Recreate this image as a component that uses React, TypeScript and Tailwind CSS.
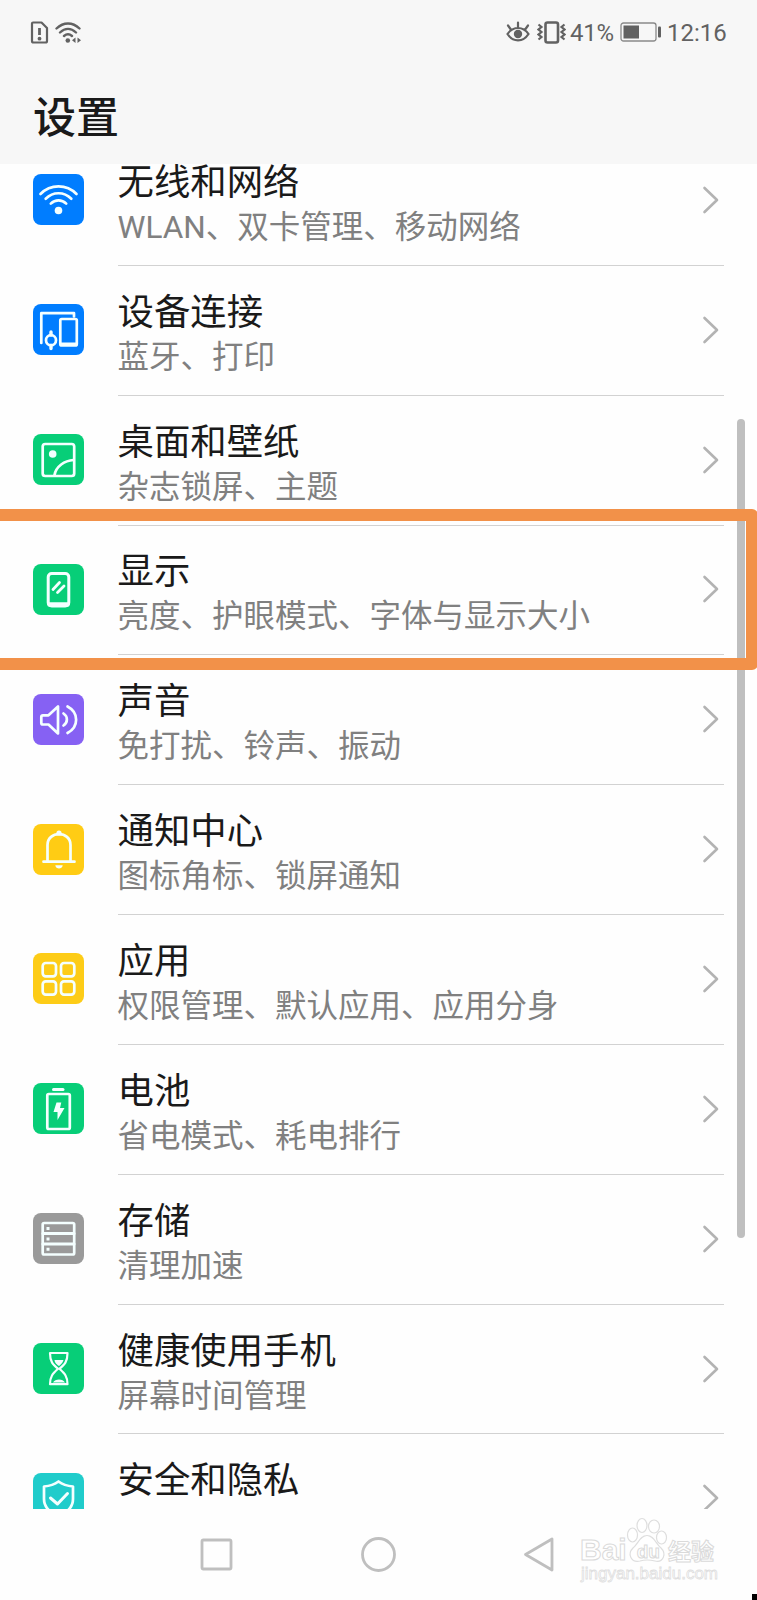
import type { ReactNode } from "react";

type Setting = {
  title: string;
  desc?: string;
  color: string;
  icon: ReactNode;
};

const settings: Setting[] = [
  {
    title: "无线和网络",
    desc: "WLAN、双卡管理、移动网络",
    color: "bg-[#007dff]",
    icon: (
      <>
        <path d="M7.5 20C17.5 9.8 33.5 9.8 43.5 20M12.7 24.8C20 17.4 31 17.4 38.3 24.8M17.8 29.6C22.2 25.2 28.8 25.2 33.2 29.6" />
        <circle cx="25.5" cy="36.5" r="3.8" fill="currentColor" stroke="none" />
      </>
    ),
  },
  {
    title: "设备连接",
    desc: "蓝牙、打印",
    color: "bg-[#007dff]",
    icon: (
      <>
        <path d="M8.3 39V9.2H41V12.5" />
        <rect x="27.3" y="15" width="16.5" height="26.5" rx="1.5" />
        <path d="M28 40.2H43" strokeWidth="3.5" />
        <circle cx="18" cy="36.2" r="5" />
        <path d="M18 28V31M18 41.5V44.5" strokeWidth="3.4" />
      </>
    ),
  },
  {
    title: "桌面和壁纸",
    desc: "杂志锁屏、主题",
    color: "bg-[#07ce78]",
    icon: (
      <>
        <rect x="9.7" y="10" width="31.5" height="32" rx="2.5" />
        <circle cx="19.7" cy="20" r="3.8" fill="currentColor" stroke="none" />
        <path d="M21.5 41C23 32.5 31.5 26.5 40.5 26" />
      </>
    ),
  },
  {
    title: "显示",
    desc: "亮度、护眼模式、字体与显示大小",
    color: "bg-[#07ce78]",
    icon: (
      <>
        <rect x="15.2" y="9.5" width="20.6" height="32.5" rx="3.5" strokeWidth="3" />
        <path d="M16.5 40.5H34.500" strokeWidth="4.5" />
        <path d="M20 25.500L26.500 18.500M24.500 28.500L31 22" strokeWidth="2.8" />
      </>
    ),
  },
  {
    title: "声音",
    desc: "免打扰、铃声、振动",
    color: "bg-[#8661f3]",
    icon: (
      <>
        <path d="M10 21.3H15.5L25 12.5V39.5L15.5 30.5H10Q8.3 30.5 8.3 29V23Q8.3 21.3 10 21.3Z" />
        <path d="M30.500 19.500C35 22.500 35 28.500 30.500 31.500M34.500 12.500C46 18.500 46 33 34.500 39" />
      </>
    ),
  },
  {
    title: "通知中心",
    desc: "图标角标、锁屏通知",
    color: "bg-[#ffcc14]",
    icon: (
      <>
        <path d="M10.5 37.7H41.500M14.500 37V21C14.500 6.500 37.500 6.500 37.500 21V37" />
        <circle cx="26" cy="9" r="2.6" fill="currentColor" stroke="none" />
        <path d="M22.300 41.200H29.700C29.200 45.500 22.800 45.500 22.300 41.200Z" fill="currentColor" stroke="none" />
      </>
    ),
  },
  {
    title: "应用",
    desc: "权限管理、默认应用、应用分身",
    color: "bg-[#fdcc17]",
    icon: (
      <>
        <rect x="9.700" y="10" width="13.3" height="13.3" rx="3" />
        <rect x="28" y="10" width="13.3" height="13.3" rx="3" />
        <rect x="9.700" y="28.3" width="13.3" height="13.3" rx="3" />
        <rect x="28" y="28.3" width="13.3" height="13.3" rx="3" />
      </>
    ),
  },
  {
    title: "电池",
    desc: "省电模式、耗电排行",
    color: "bg-[#07ce78]",
    icon: (
      <>
        <rect x="14.3" y="11" width="22.5" height="35" rx="1.5" />
        <path d="M20.500 6.500H30" strokeWidth="3" />
        <path d="M23.500 19.500H28.300L27 25H31.500L24.500 37V29H20.500Z" fill="currentColor" stroke="none" />
      </>
    ),
  },
  {
    title: "存储",
    desc: "清理加速",
    color: "bg-[#9a9a9a]",
    icon: (
      <>
        <rect x="9.700" y="10" width="31.5" height="31.5" rx="1.5" />
        <path d="M10 20.500H41M10 31H41" strokeWidth="3.2" />
        <path d="M13.500 15.500H16.500M13.500 26H16.500M13.500 36.300H16.500" strokeWidth="3" strokeLinecap="butt" />
      </>
    ),
  },
  {
    title: "健康使用手机",
    desc: "屏幕时间管理",
    color: "bg-[#07ce78]",
    icon: (
      <>
        <path
          d="M17 10H34.500C34.500 19 31.500 21.500 26.500 25.800C31.500 30.500 34.500 33 34.500 41.200H17C17 33 20 30.500 25 25.800C20 21.500 17 19 17 10Z"
          strokeWidth="2.2"
        />
        <path d="M21.500 17H30.500C29.500 20.500 27.500 21.500 26 23C24 21.500 22 20.500 21.500 17ZM20 39.500C22 35.500 30 35.500 32 39.500Z" fill="currentColor" stroke="none" />
      </>
    ),
  },
  {
    title: "安全和隐私",
    color: "bg-[#20cccb]",
    icon: (
      <>
        <path d="M25.500 8.500C29.500 11.500 34.500 13 40 13.500V26C40 35 33 40 25.500 43C18 40 11 35 11 26V13.500C16.500 13 21.500 11.500 25.500 8.500Z" />
        <path d="M17.500 25L24.500 31L34.500 20.500" strokeWidth="3" />
      </>
    ),
  },
];

function StatusBar() {
  return (
    <div className="flex h-16 items-center justify-between px-[30px] font-[Roboto,sans-serif] text-[24px] text-[#626262]">
      <div className="flex items-center gap-[6px]">
        <svg width="19" height="23" viewBox="0 0 19 23" fill="none" stroke="currentColor" strokeWidth="2.2" strokeLinejoin="round">
          <path d="M2 2.500Q2 1.500 3 1.500H11.500L17 7V20Q17 21.500 15.500 21.500H3.500Q2 21.500 2 20Z" />
          <path d="M9.500 7V14" strokeWidth="2.8" />
          <circle cx="9.500" cy="17.700" r="1.900" fill="currentColor" stroke="none" />
        </svg>
        <svg width="27" height="23" viewBox="0 0 27 23" fill="none" stroke="currentColor" strokeWidth="2.4" strokeLinecap="round">
          <path d="M1.500 7.500C8.500 0.800 17.500 0.800 24.500 7.500M5 11.500C10 6.800 16 6.800 21 11.500M9 15C11.500 12.700 14.500 12.700 17 15" />
          <circle cx="12.800" cy="19.500" r="2.300" fill="currentColor" stroke="none" />
          <path d="M20.500 16.500V22L17 19.300ZM22.500 16.500V22L26 19.300Z" fill="currentColor" stroke="none" />
        </svg>
      </div>
      <div className="flex items-center">
        <svg width="24" height="22" viewBox="0 0 24 22" fill="none" stroke="currentColor" strokeWidth="2.2" strokeLinecap="round">
          <path d="M1.500 13C7 5 17 5 22.500 13C17 21.500 7 21.500 1.500 13ZM12 1.500V6M2 4.500L4.500 8M22 4.500L19.500 8" />
          <circle cx="12" cy="13" r="4.200" fill="currentColor" stroke="none" />
        </svg>
        <svg className="ml-[7px]" width="29" height="23" viewBox="0 0 29 23" fill="none" stroke="currentColor" strokeWidth="2.2">
          <rect x="8.500" y="1.500" width="12.500" height="20" rx="2" strokeWidth="2.600" />
          <path d="M1.500 3.500L4.500 6L1.500 8.500L4.500 11L1.500 13.500L4.500 16L1.500 18.500M27.500 3.500L24.500 6L27.500 8.500L24.500 11L27.500 13.500L24.500 16L27.500 18.500" />
        </svg>
        <span className="ml-[4px] mt-px w-[44px] whitespace-nowrap tracking-[-0.2px]">41%</span>
        <svg className="ml-[6px]" width="42" height="20" viewBox="0 0 42 20" fill="none">
          <rect x="1" y="1" width="35" height="18" rx="2.5" stroke="#8a8a8a" strokeWidth="1.3" />
          <rect x="3.500" y="3.500" width="15.500" height="13" fill="currentColor" />
          <rect x="38" y="4.500" width="3" height="11" rx="1" fill="currentColor" />
        </svg>
        <span className="ml-[5px] mt-px w-[60px] whitespace-nowrap">12:16</span>
      </div>
    </div>
  );
}

function SettingRow({ item }: { item: Setting }) {
  return (
    <div className="flex h-[129.85px] shrink-0 items-center pl-[33px]">
      <div className={`mb-[2px] size-[51px] shrink-0 rounded-[8px] ${item.color}`}>
        <svg
          className="text-[#f4ffff]"
          width="51"
          height="51"
          viewBox="0 0 51 51"
          fill="none"
          stroke="currentColor"
          strokeWidth="2.7"
          strokeLinecap="round"
          strokeLinejoin="round"
        >
          {item.icon}
        </svg>
      </div>
      <div className="ml-[33.5px] flex h-full w-[606.5px] items-center justify-between border-b border-[#d2d2d2]">
        <div className="h-[91px] whitespace-nowrap pt-[4px]">
          <h2 className="text-[36.4px] leading-[47px] text-[#1a1a1a]">{item.title}</h2>
          {item.desc && <p className="text-[31.5px] leading-[44px] text-[#808080]">{item.desc}</p>}
        </div>
        <svg className="mb-px mr-[4px]" width="18" height="28" viewBox="0 0 18 28" fill="none" stroke="#b3b3b3" strokeWidth="2.6" strokeLinecap="round" strokeLinejoin="round">
          <path d="M2.500 2L15 14L2.500 26" />
        </svg>
      </div>
    </div>
  );
}

function Watermark() {
  return (
    <div className="absolute left-[580px] top-[1516px] h-[70px] w-[140px] text-white">
      <svg className="absolute left-0 top-0" width="140" height="50" viewBox="0 0 140 50" fill="white" stroke="#dedede" strokeWidth="1.2">
        <ellipse cx="52.500" cy="19" rx="5" ry="7" />
        <ellipse cx="62" cy="9.500" rx="5" ry="7" />
        <ellipse cx="74" cy="10.500" rx="5.500" ry="6.500" />
        <ellipse cx="81.500" cy="21.500" rx="5" ry="6.500" />
        <path d="M67 19.500C74 19.500 76 28 81 32C87 38 83 47 75 45C69 43.500 65 43.500 60 45C51 47 47 38 53 32C58 28 60 19.500 67 19.500Z" />
      </svg>
      <div className="absolute left-0 top-[19px] flex items-end whitespace-nowrap font-['Liberation_Sans',sans-serif] text-[30px] font-bold leading-[30px] [-webkit-text-stroke:1px_#dadada]">
        <span>Bai</span>
        <span className="ml-[10px] text-[19px] leading-[27px]">du</span>
        <span className="ml-[8px] font-['Noto_Sans_CJK_SC',sans-serif] text-[23px] leading-[30px]">经验</span>
      </div>
      <div className="absolute left-px top-[48px] whitespace-nowrap font-['Liberation_Sans',sans-serif] text-[17px] leading-[20px] [-webkit-text-stroke:0.8px_#dedede]">
        jingyan.baidu.com
      </div>
    </div>
  );
}

export default function App() {
  return (
    <div className="relative flex h-[1600px] w-[757px] flex-col overflow-hidden bg-[#fefefe] font-[Roboto,'Noto_Sans_CJK_SC',sans-serif]">
      <header className="h-[164px] shrink-0 bg-[#f7f7f7]">
        <StatusBar />
        <h1 className="pl-[33px] pt-[22px] text-[43px] font-medium leading-[64px] text-[#1a1a1a]">设置</h1>
      </header>

      <main className="h-[1345px] shrink-0 overflow-hidden">
        <div className="-mt-[28px] flex flex-col">
          {settings.map((item) => (
            <SettingRow key={item.title} item={item} />
          ))}
        </div>
      </main>

      <nav className="flex flex-1 items-center pl-[200px]">
        <svg width="356" height="36" viewBox="0 0 356 36" fill="none" stroke="#bfbfbf" strokeWidth="2.8" strokeLinejoin="round">
          <rect x="2" y="3" width="29" height="29" rx="1.5" />
          <circle cx="178.500" cy="17.500" r="16" />
          <path d="M352 2V33L325.500 17.500Z" />
        </svg>
      </nav>

      {/* scroll thumb and highlighted row */}
      <div className="absolute left-[736.5px] top-[419px] h-[819px] w-[8.5px] rounded-full bg-[#bfbfbf]" />
      <div className="absolute -left-5 top-[508.5px] h-[161px] w-[778px] rounded-[6px] border-[12.5px] border-[#f29149]" />
      <Watermark />
      <div className="absolute bottom-0 right-0 h-[6px] w-[5px] bg-black" />
    </div>
  );
}
